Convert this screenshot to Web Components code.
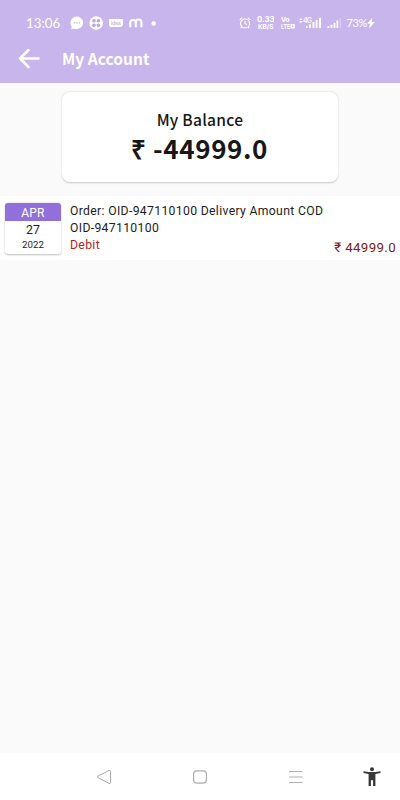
<!DOCTYPE html>
<html lang="en">
<head>
<meta charset="utf-8">
<title>My Account</title>
<style>
body{margin:0;background:#fafafa;font-family:Roboto,"Noto Sans",sans-serif;color:#1c1c1c}
</style>
</head>
<body>
<account-screen></account-screen>
<script>
const define = (name, html) => customElements.define(name, class extends HTMLElement {
  constructor() {
    super();
    const t = document.createElement('template');
    t.innerHTML = html;
    this.attachShadow({mode: 'open'}).append(t.content.cloneNode(true));
  }
});

define('status-bar', `
<style>
:host{display:flex;justify-content:space-between;align-items:center;height:14px;padding:16px 25px 4px 26px;color:#fff}
div{display:flex;align-items:center}
svg{display:block;flex:none}
.time{font:400 13.3px/14px Lato,sans-serif;width:44px;white-space:nowrap}
.pct{font:400 11px/14px Lato,sans-serif;width:20.5px;margin-left:5.5px;white-space:nowrap;letter-spacing:-.4px}
</style>
<div>
 <span class="time">13:06</span>
 <svg width="14" height="14" viewBox="0 0 14 14"><path d="M7 .4a6.6 6.3 0 1 1-3 12.1Q2.5 13.5 1 13.2l.8-2.5A6.4 6.4 0 0 1 7 .4Z" fill="#fff"/><g fill="#c8b5eb"><circle cx="4.5" cy="6.7" r=".7"/><circle cx="7" cy="6.7" r=".7"/><circle cx="9.5" cy="6.7" r=".7"/></g></svg>
 <svg width="14" height="14" viewBox="0 0 14 14" style="margin-left:5px"><circle cx="7.2" cy="7" r="6.8" fill="#fff"/><g fill="#b9a4e2"><circle cx="5" cy="4.8" r="1.8"/><circle cx="9.4" cy="4.8" r="1.8"/><circle cx="5" cy="9.2" r="1.8"/><circle cx="9.4" cy="9.2" r="1.8"/></g></svg>
 <svg width="14" height="8" viewBox="0 0 14 8" style="margin-left:6px"><path d="M0 0h14v5.5Q13.5 8 11 8H2Q0 8 0 6Z" fill="#fff"/><text x="2" y="5.6" font-family="Inter" font-weight="500" font-size="4.8" textLength="9.7" fill="#bda8e5">Idea</text></svg>
 <svg width="14" height="10" viewBox="0 0 14 10" style="margin-left:6px"><path d="M1.3 9.3V4.3a2.8 2.8 0 0 1 5.5 0V9.3M6.8 4.3a2.8 2.8 0 0 1 5.6 0V9.3" fill="none" stroke="#fff" stroke-width="2.1"/></svg>
 <svg width="5" height="5" viewBox="0 0 5 5" style="margin-left:8px"><circle cx="2.7" cy="2.5" r="2.3" fill="#fff"/></svg>
</div>
<div>
 <svg width="12" height="12" viewBox="0 0 12 12" fill="none" stroke="#fff" stroke-width="1.1"><circle cx="6" cy="6.5" r="4.5"/><path d="M6 4v2.7l2 .8M.7 2.8 3 .8M9 .8l2.3 2M2.7 10l-.9 1.2M9.3 10l.9 1.2"/></svg>
 <svg width="17" height="14" viewBox="0 0 17 14" fill="#fff" font-family="Inter" font-weight="700" style="margin:0 7px 0 6px"><text x="0" y="6.4" font-size="7.5" textLength="17.5" lengthAdjust="spacingAndGlyphs">0.33</text><text x="1" y="13" font-size="6.5" textLength="15.5" lengthAdjust="spacingAndGlyphs">KB/S</text></svg>
 <svg width="14" height="14" viewBox="0 0 14 14" fill="#fff" font-family="Inter" font-weight="800" style="margin-right:4.5px"><text x="0" y="6.4" font-size="6.8" textLength="8.5" lengthAdjust="spacingAndGlyphs">Vo</text><text x="0" y="12.6" font-size="6.5" textLength="9" lengthAdjust="spacingAndGlyphs">LTE</text><path d="M9.5 8h4.3v4.6H9.500zM10.800 9.500v1.600h1.500V9.500Z" fill-rule="evenodd"/></svg>
 <svg width="22" height="12" viewBox="0 0 22 12" fill="#fff"><path d="m0 3 1.800-2 1.800 2ZM0 4l1.800 2 1.800-2Z"/><text x="4" y="6.300" font-family="Inter" font-weight="500" font-size="7" textLength="9">4G</text><path d="M7 9h1.500v2H7zM10 7.500h2V11h-2zM13.500 5h2v6h-2zM16.700 3h1.800v8h-1.800zM20 .7h2V11H20z"/></svg>
 <svg width="14" height="12" viewBox="0 0 14 12" fill="#fff" style="margin-left:6px"><path d="M.5 9h1.700v2H.5zM3.500 7.800h1.800V11H3.500zM6.600 6h1.800v5H6.600zM9.500 3.500h1.700V11H9.500z"/><path d="M12.500 1H14v10h-1.500z" opacity=".3"/></svg>
 <span class="pct">73%</span>
 <svg width="8" height="12" viewBox="0 0 8 12"><path d="M5.300.5.2 6.800h2.900L2 11.500 7.800 5H4.600Z" fill="#fff"/></svg>
</div>`);

define('app-bar', `
<style>
:host{display:flex;align-items:center;height:49px;padding-left:18px;color:#fff}
svg{flex:none;display:block}
h1{margin:0 0 1px 22px;font:700 15.5px/24px "Noto Sans CJK JP",sans-serif;letter-spacing:.05px;white-space:nowrap}
</style>
<svg width="22" height="20" viewBox="0 0 22 20"><path d="M20.5 9.5H2M10.5 1 2 9.5l8.5 8.5" fill="none" stroke="#fff" stroke-width="2.5" stroke-linecap="round" stroke-linejoin="round"/></svg>
<h1><slot></slot></h1>`);

define('balance-card', `
<style>
:host{display:block;box-sizing:border-box;width:276px;height:90px;margin:9px 0 0 62px;padding-top:15px;border-radius:8px;background:#fff;box-shadow:0 .5px 2px #0003;text-align:center;color:#171717}
div{font:500 15.6px/24px "Noto Sans CJK JP",sans-serif;letter-spacing:.25px}
strong{display:block;font:700 26px/34px "Noto Sans CJK JP",sans-serif;letter-spacing:.6px;white-space:nowrap;margin-right:1px}
</style>
<div><slot name="label"></slot></div><strong><slot></slot></strong>`);

define('date-tile', `
<style>
:host{display:block;box-sizing:border-box;width:56px;height:51px;border-radius:3px;background:#fff;box-shadow:0 .5px 2px #0004;text-align:center;overflow:hidden}
.m{height:18px;background:#9270db;color:#fff;font-size:12px;line-height:20px;letter-spacing:.2px}
.d{font-size:12.3px;line-height:18px;letter-spacing:.2px}
.y{font-size:9.7px;line-height:11px;letter-spacing:.1px}
</style>
<div class="m"><slot name="month"></slot></div><div class="d"><slot name="day"></slot></div><div class="y"><slot name="year"></slot></div>`);

define('transaction-row', `
<style>
:host{display:flex;box-sizing:border-box;height:64px;margin-top:14px;padding:7px 4px 0 5px;background:#fff;font-size:12.2px;line-height:17px;letter-spacing:.34px}
.text{flex:1;margin-left:9px;white-space:nowrap}
.kind{color:#b71c1c}
.amount{align-self:flex-end;color:#7b1818;font-size:13.3px;letter-spacing:.35px;padding-bottom:4.500px;white-space:nowrap}
</style>
<slot name="date"></slot>
<div class="text"><div><slot name="line1"></slot></div><div><slot name="line2"></slot></div><div class="kind"><slot name="kind"></slot></div></div>
<div class="amount"><slot name="amount"></slot></div>`);

define('nav-bar', `
<style>
:host{display:grid;grid-template-columns:56px 96px 96px 96px 56px;align-items:center;justify-items:center;height:47px;background:#fff}
svg{display:block}
</style>
<i></i>
<svg width="16" height="16" viewBox="0 0 16 16" fill="none" stroke="#aaa" stroke-width="1"><path d="M13 1.5 1.8 7.2q-1 .7 0 1.4L13 14.4q1.500.5 1.500-1V2.500q0-1.500-1.500-1Z"/></svg>
<svg width="16" height="16" viewBox="0 0 16 16" fill="none" stroke="#aaa" stroke-width="1.1"><rect x="1.6" y="1.9" width="12.8" height="12.2" rx="3"/></svg>
<svg width="16" height="16" viewBox="0 0 16 16" fill="none" stroke="#b0b0b0" stroke-width="1"><path d="M1 2.500h13.500M1 8h13.500M1 13.500h13.500"/></svg>
<svg width="18" height="20" viewBox="0 0 18 20" fill="#383838"><circle cx="9" cy="2.200" r="2"/><path d="m.5 4.200 5 .9h7l5-.9v1.700l-5.100 1v12.100h-2.300v-5.800H7.900v5.800H5.600V6.900l-5.100-1Z"/></svg>`);

define('account-screen', `
<style>
:host{display:flex;flex-direction:column;height:800px;background:#fafafa;overflow:hidden}
header{background:#c8b5eb;height:83px}
main{flex:1}
</style>
<header><status-bar></status-bar><app-bar>My Account</app-bar></header>
<main>
 <balance-card><span slot="label">My Balance</span>₹ -44999.0</balance-card>
 <transaction-row>
  <date-tile slot="date"><span slot="month">APR</span><span slot="day">27</span><span slot="year">2022</span></date-tile>
  <span slot="line1">Order: OID-947110100 Delivery Amount COD</span>
  <span slot="line2">OID-947110100</span>
  <span slot="kind">Debit</span>
  <span slot="amount">₹ 44999.0</span>
 </transaction-row>
</main>
<nav-bar></nav-bar>`);
</script>
</body>
</html>
